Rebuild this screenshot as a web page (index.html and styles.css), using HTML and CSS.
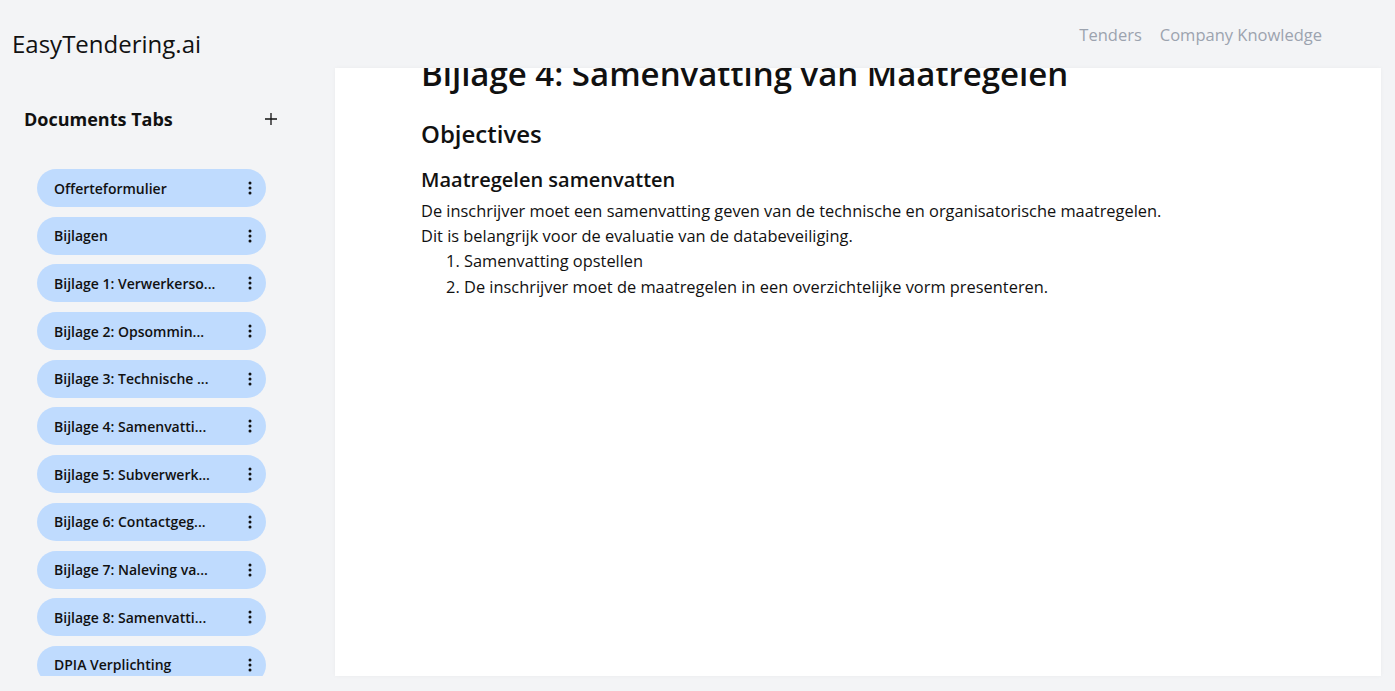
FILE: index.html
```html
<!DOCTYPE html>
<html lang="nl">
<head>
    <meta charset="UTF-8">
    <meta name="viewport" content="width=device-width, initial-scale=1.0">
    <title>EasyTendering.ai</title>
    <link rel="stylesheet" href="styles.css">
</head>
<body>
    <div class="app">
        <!-- Zijbalk met documenten -->
        <aside class="sidebar">
            <div class="brand">EasyTendering.ai</div>

            <div class="tabs-header">
                <span class="tabs-title">Documents Tabs</span>
                <button class="add-btn" aria-label="Tab toevoegen">
                    <svg width="14" height="14" viewBox="0 0 14 14"><path d="M7 1v12M1 7h12" stroke="#111" stroke-width="1.3" fill="none"/></svg>
                </button>
            </div>

            <ul class="tab-list">
                <li class="tab"><span class="tab-name">Offerteformulier</span><span class="kebab"><svg width="4" height="14" viewBox="0 0 4 14"><circle cx="2" cy="2" r="1.5"/><circle cx="2" cy="7" r="1.5"/><circle cx="2" cy="12" r="1.5"/></svg></span></li>
                <li class="tab"><span class="tab-name">Bijlagen</span><span class="kebab"><svg width="4" height="14" viewBox="0 0 4 14"><circle cx="2" cy="2" r="1.5"/><circle cx="2" cy="7" r="1.5"/><circle cx="2" cy="12" r="1.5"/></svg></span></li>
                <li class="tab"><span class="tab-name">Bijlage 1: Verwerkerso...</span><span class="kebab"><svg width="4" height="14" viewBox="0 0 4 14"><circle cx="2" cy="2" r="1.5"/><circle cx="2" cy="7" r="1.5"/><circle cx="2" cy="12" r="1.5"/></svg></span></li>
                <li class="tab"><span class="tab-name">Bijlage 2: Opsommin...</span><span class="kebab"><svg width="4" height="14" viewBox="0 0 4 14"><circle cx="2" cy="2" r="1.5"/><circle cx="2" cy="7" r="1.5"/><circle cx="2" cy="12" r="1.5"/></svg></span></li>
                <li class="tab"><span class="tab-name">Bijlage 3: Technische ...</span><span class="kebab"><svg width="4" height="14" viewBox="0 0 4 14"><circle cx="2" cy="2" r="1.5"/><circle cx="2" cy="7" r="1.5"/><circle cx="2" cy="12" r="1.5"/></svg></span></li>
                <li class="tab"><span class="tab-name">Bijlage 4: Samenvatti...</span><span class="kebab"><svg width="4" height="14" viewBox="0 0 4 14"><circle cx="2" cy="2" r="1.5"/><circle cx="2" cy="7" r="1.5"/><circle cx="2" cy="12" r="1.5"/></svg></span></li>
                <li class="tab"><span class="tab-name">Bijlage 5: Subverwerk...</span><span class="kebab"><svg width="4" height="14" viewBox="0 0 4 14"><circle cx="2" cy="2" r="1.5"/><circle cx="2" cy="7" r="1.5"/><circle cx="2" cy="12" r="1.5"/></svg></span></li>
                <li class="tab"><span class="tab-name">Bijlage 6: Contactgeg...</span><span class="kebab"><svg width="4" height="14" viewBox="0 0 4 14"><circle cx="2" cy="2" r="1.5"/><circle cx="2" cy="7" r="1.5"/><circle cx="2" cy="12" r="1.5"/></svg></span></li>
                <li class="tab"><span class="tab-name">Bijlage 7: Naleving va...</span><span class="kebab"><svg width="4" height="14" viewBox="0 0 4 14"><circle cx="2" cy="2" r="1.5"/><circle cx="2" cy="7" r="1.5"/><circle cx="2" cy="12" r="1.5"/></svg></span></li>
                <li class="tab"><span class="tab-name">Bijlage 8: Samenvatti...</span><span class="kebab"><svg width="4" height="14" viewBox="0 0 4 14"><circle cx="2" cy="2" r="1.5"/><circle cx="2" cy="7" r="1.5"/><circle cx="2" cy="12" r="1.5"/></svg></span></li>
                <li class="tab"><span class="tab-name">DPIA Verplichting</span><span class="kebab"><svg width="4" height="14" viewBox="0 0 4 14"><circle cx="2" cy="2" r="1.5"/><circle cx="2" cy="7" r="1.5"/><circle cx="2" cy="12" r="1.5"/></svg></span></li>
            </ul>
        </aside>

        <!-- Hoofdgedeelte -->
        <main class="main">
            <nav class="topnav">
                <a href="#">Tenders</a>
                <a href="#">Company Knowledge</a>
            </nav>

            <section class="doc-panel">
                <div class="doc-content">
                    <h1>Bijlage 4: Samenvatting van Maatregelen</h1>
                    <h2>Objectives</h2>
                    <h3>Maatregelen samenvatten</h3>
                    <p>De inschrijver moet een samenvatting geven van de technische en organisatorische maatregelen.<br>Dit is belangrijk voor de evaluatie van de databeveiliging.</p>
                    <ol>
                        <li>Samenvatting opstellen</li>
                        <li>De inschrijver moet de maatregelen in een overzichtelijke vorm presenteren.</li>
                    </ol>
                </div>
            </section>
        </main>
    </div>
</body>
</html>
```

FILE: styles.css
```css
/* Algemene stijlen */
* {
    box-sizing: border-box;
}

body {
    margin: 0;
    padding: 0;
    font-family: "Open Sans", "Noto Sans", Arial, sans-serif;
    background-color: #f3f4f6;
    color: #111;
    height: 691px;
    overflow: hidden;
}

.app {
    display: flex;
    height: 100%;
    padding-bottom: 15px;
}

/* Zijbalk */
.sidebar {
    width: 334px;
    flex-shrink: 0;
    display: flex;
    flex-direction: column;
}

.brand {
    font-size: 24px;
    line-height: 32px;
    padding: 28px 0 0 12px;
    color: #111;
}

.tabs-header {
    display: flex;
    align-items: center;
    justify-content: space-between;
    margin: 45px 54px 0 24px;
    height: 28px;
}

.tabs-title {
    font-size: 18px;
    font-weight: 700;
}

.add-btn {
    background: none;
    border: none;
    padding: 0;
    width: 18px;
    height: 18px;
    display: flex;
    align-items: center;
    justify-content: center;
    cursor: pointer;
}

.tab-list {
    list-style: none;
    margin: 36px 0 0 0;
    padding: 0 0 0 37px;
    flex: 1;
    overflow: hidden;
    display: flex;
    flex-direction: column;
    gap: 9.7px;
}

.tab {
    width: 229px;
    height: 38px;
    flex-shrink: 0;
    background-color: #bfdbfe;
    border-radius: 19px;
    display: flex;
    align-items: center;
    justify-content: space-between;
    padding: 0 14px 0 17px;
    font-size: 14px;
    font-weight: 600;
}

.kebab {
    display: flex;
    fill: #111;
}

/* Hoofdgedeelte */
.main {
    flex: 1;
    display: flex;
    flex-direction: column;
    padding-right: 14px;
}

.topnav {
    height: 68px;
    display: flex;
    justify-content: flex-end;
    gap: 18px;
    padding: 24px 59px 0 0;
}

.topnav a {
    color: #9ca3af;
    text-decoration: none;
    font-size: 16.5px;
    line-height: 22px;
}

.doc-panel {
    flex: 1;
    background: #fff;
    margin-left: 1px;
    overflow: hidden;
    box-shadow: 0 0 4px rgba(0,0,0,0.04);
}

.doc-content {
    padding: 0 86px;
    margin-top: -14px;
}

h1 {
    font-size: 33px;
    font-weight: 600;
    line-height: 40px;
    margin: 0 0 24px 0;
}

h2 {
    font-size: 24px;
    font-weight: 600;
    line-height: 32px;
    margin: 0 0 17px 0;
}

h3 {
    font-size: 20px;
    font-weight: 600;
    line-height: 26px;
    margin: 0 0 5px 0;
}

p {
    font-size: 16.4px;
    line-height: 25px;
    margin: 0;
}

ol {
    font-size: 16.4px;
    line-height: 26px;
    margin: 0;
    padding-left: 43px;
}
```
